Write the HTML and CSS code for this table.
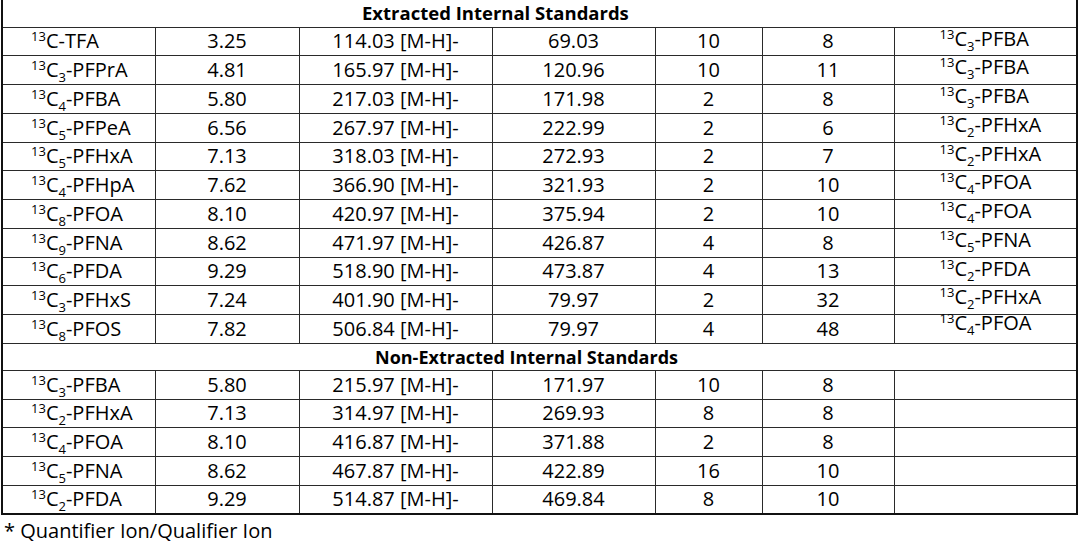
FILE: index.html
```html
<!DOCTYPE html>
<html>
<head>
<meta charset="utf-8">
<link rel="stylesheet" href="styles.css">
</head>
<body>
<table class="std">
  <colgroup>
    <col class="c1"><col class="c2"><col class="c3"><col class="c4"><col class="c5"><col class="c6"><col class="c7">
  </colgroup>
  <tr class="head"><td colspan="7"><span class="h1">Extracted Internal Standards</span></td></tr>
  <tr><td class="nm"><sup>13</sup>C-TFA</td><td>3.25</td><td>114.03 [M-H]-</td><td>69.03</td><td>10</td><td>8</td><td class="ref"><sup>13</sup>C<sub>3</sub>-PFBA</td></tr>
  <tr><td class="nm"><sup>13</sup>C<sub>3</sub>-PFPrA</td><td>4.81</td><td>165.97 [M-H]-</td><td>120.96</td><td>10</td><td>11</td><td class="ref"><sup>13</sup>C<sub>3</sub>-PFBA</td></tr>
  <tr><td class="nm"><sup>13</sup>C<sub>4</sub>-PFBA</td><td>5.80</td><td>217.03 [M-H]-</td><td>171.98</td><td>2</td><td>8</td><td class="ref"><sup>13</sup>C<sub>3</sub>-PFBA</td></tr>
  <tr><td class="nm"><sup>13</sup>C<sub>5</sub>-PFPeA</td><td>6.56</td><td>267.97 [M-H]-</td><td>222.99</td><td>2</td><td>6</td><td class="ref"><sup>13</sup>C<sub>2</sub>-PFHxA</td></tr>
  <tr><td class="nm"><sup>13</sup>C<sub>5</sub>-PFHxA</td><td>7.13</td><td>318.03 [M-H]-</td><td>272.93</td><td>2</td><td>7</td><td class="ref"><sup>13</sup>C<sub>2</sub>-PFHxA</td></tr>
  <tr><td class="nm"><sup>13</sup>C<sub>4</sub>-PFHpA</td><td>7.62</td><td>366.90 [M-H]-</td><td>321.93</td><td>2</td><td>10</td><td class="ref"><sup>13</sup>C<sub>4</sub>-PFOA</td></tr>
  <tr><td class="nm"><sup>13</sup>C<sub>8</sub>-PFOA</td><td>8.10</td><td>420.97 [M-H]-</td><td>375.94</td><td>2</td><td>10</td><td class="ref"><sup>13</sup>C<sub>4</sub>-PFOA</td></tr>
  <tr><td class="nm"><sup>13</sup>C<sub>9</sub>-PFNA</td><td>8.62</td><td>471.97 [M-H]-</td><td>426.87</td><td>4</td><td>8</td><td class="ref"><sup>13</sup>C<sub>5</sub>-PFNA</td></tr>
  <tr><td class="nm"><sup>13</sup>C<sub>6</sub>-PFDA</td><td>9.29</td><td>518.90 [M-H]-</td><td>473.87</td><td>4</td><td>13</td><td class="ref"><sup>13</sup>C<sub>2</sub>-PFDA</td></tr>
  <tr><td class="nm"><sup>13</sup>C<sub>3</sub>-PFHxS</td><td>7.24</td><td>401.90 [M-H]-</td><td>79.97</td><td>2</td><td>32</td><td class="ref"><sup>13</sup>C<sub>2</sub>-PFHxA</td></tr>
  <tr><td class="nm"><sup>13</sup>C<sub>8</sub>-PFOS</td><td>7.82</td><td>506.84 [M-H]-</td><td>79.97</td><td>4</td><td>48</td><td class="ref top"><sup>13</sup>C<sub>4</sub>-PFOA</td></tr>
  <tr class="head"><td colspan="7"><span class="h2">Non-Extracted Internal Standards</span></td></tr>
  <tr><td class="nm"><sup>13</sup>C<sub>3</sub>-PFBA</td><td>5.80</td><td>215.97 [M-H]-</td><td>171.97</td><td>10</td><td>8</td><td class="ref"></td></tr>
  <tr><td class="nm"><sup>13</sup>C<sub>2</sub>-PFHxA</td><td>7.13</td><td>314.97 [M-H]-</td><td>269.93</td><td>8</td><td>8</td><td class="ref"></td></tr>
  <tr><td class="nm"><sup>13</sup>C<sub>4</sub>-PFOA</td><td>8.10</td><td>416.87 [M-H]-</td><td>371.88</td><td>2</td><td>8</td><td class="ref"></td></tr>
  <tr><td class="nm"><sup>13</sup>C<sub>5</sub>-PFNA</td><td>8.62</td><td>467.87 [M-H]-</td><td>422.89</td><td>16</td><td>10</td><td class="ref"></td></tr>
  <tr><td class="nm"><sup>13</sup>C<sub>2</sub>-PFDA</td><td>9.29</td><td>514.87 [M-H]-</td><td>469.84</td><td>8</td><td>10</td><td class="ref"></td></tr>
</table>
<p class="note">* Quantifier Ion/Qualifier Ion</p>
</body>
</html>
```

FILE: styles.css
```css
html, body {
  margin: 0;
  padding: 0;
  background: #ffffff;
}
body {
  font-family: "Open Sans", "Liberation Sans", sans-serif;
  color: #000000;
  font-size: 20px;
}
.std {
  border-collapse: collapse;
  table-layout: fixed;
  width: 1077px;
  margin-left: 1px;
  border-left: 2px solid #111;
  border-right: 2px solid #111;
  border-bottom: 2px solid #111;
}
.c1 { width: 153px; }
.c2 { width: 144px; }
.c3 { width: 193px; }
.c4 { width: 163px; }
.c5 { width: 107px; }
.c6 { width: 132px; }
.c7 { width: 183px; }
.std tr { height: 28.75px; }
.std td {
  border: 1px solid #2a2a2a;
  padding: 0;
  text-align: center;
  vertical-align: middle;
  line-height: 20px;
  white-space: nowrap;
}
.std tr.head { height: 27px; }
.std tr.head td {
  text-align: left;
  font-weight: bold;
  font-size: 18.5px;
  border-left: none;
  border-right: none;
}
.std tr.head:first-child td { border-top: none; }
.h1 { padding-left: 359px; }
.h2 { padding-left: 372px; font-size: 18px; }
.std td.nm {
  text-align: left;
  padding-left: 28px;
}
.std td.ref {
  text-align: left;
  padding-left: 45px;
  vertical-align: top;
  line-height: 22px;
}
.std td.ref.top {
  line-height: 16px;
}
sup, sub {
  font-size: 13px;
  line-height: 0;
}
sup { vertical-align: 7px; }
sub { vertical-align: -5px; }
.note {
  margin: 0;
  padding: 5px 0 0 4px;
  line-height: 22px;
}
```
